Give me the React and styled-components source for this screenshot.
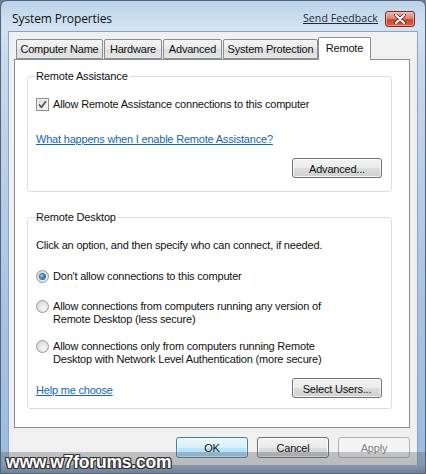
import React from "react";
import styled, { createGlobalStyle } from "styled-components";

const Global = createGlobalStyle`
  html, body { margin: 0; padding: 0; }
  body {
    width: 426px; height: 474px; overflow: hidden;
    font-family: "Liberation Sans", Arial, sans-serif;
    background: #6f8094;
  }
`;

const Frame = styled.div`
  position: relative;
  box-sizing: border-box;
  width: 426px;
  height: 474px;
  border: 1px solid #52647a;
  border-radius: 7px 7px 0 0;
  background: linear-gradient(to bottom, #bcd3ea 0px, #d3e2f2 26px, #c6d9ee 60px, #a9c4e3 300px, #9bbbe0 474px);
  display: flex;
  flex-direction: column;
  overflow: hidden;
`;

const TitleBar = styled.div`
  height: 30px;
  display: flex;
  align-items: flex-start;
  padding: 9px 10px 0 11px;
  box-sizing: border-box;
`;

const Title = styled.div`
  flex: 1;
  font-family: "Open Sans", "Noto Sans", sans-serif;
  font-size: 12px;
  line-height: 17px;
  color: #111;
  letter-spacing: -0.1px;
`;

const FeedbackLink = styled.a`
  font-family: "Open Sans", "Noto Sans", sans-serif;
  font-size: 10.5px;
  line-height: 17px;
  color: #1b2a3d;
  text-decoration: underline;
  margin-right: 7px;
  letter-spacing: 0.1px;
`;

const CloseButton = styled.div`
  width: 30px;
  height: 16px;
  margin-top: 1px;
  box-sizing: border-box;
  border: 1px solid #7d2a1e;
  border-radius: 3px;
  background: linear-gradient(to bottom, #eab2a6 0%, #de8875 45%, #c9442b 55%, #d2674d 100%);
  display: flex;
  align-items: center;
  justify-content: center;
  box-shadow: inset 0 0 0 1px rgba(255, 220, 210, 0.5);
`;

const Client = styled.div`
  margin: 0 7px 0 7px;
  flex: 1;
  background: #f0f0f0;
  border: 1px solid #8ea4bd;
  border-bottom: none;
  box-sizing: border-box;
  padding: 5px 7px 0 5px;
  display: flex;
  flex-direction: column;
`;

const TabRow = styled.div`
  display: flex;
  align-items: flex-end;
  height: 22px;
  padding-left: 2px;
  position: relative;
  z-index: 1;
`;

const Tab = styled.div`
  box-sizing: border-box;
  width: ${(p) => p.$w}px;
  height: ${(p) => (p.$active ? 23 : 20)}px;
  margin-right: ${(p) => (p.$active ? 0 : 1)}px;
  margin-left: ${(p) => (p.$active ? -1 : 0)}px;
  margin-bottom: ${(p) => (p.$active ? -1 : 0)}px;
  border: 1px solid #898c95;
  border-bottom: ${(p) => (p.$active ? "none" : "1px solid #898c95")};
  border-radius: 2px 2px 0 0;
  background: ${(p) =>
    p.$active ? "#ffffff" : "linear-gradient(to bottom, #f3f3f3 0%, #ebebeb 50%, #dcdcdc 51%, #e6e6e6 100%)"};
  font-size: 11px;
  letter-spacing: -0.2px;
  color: #111;
  display: flex;
  justify-content: center;
  align-items: ${(p) => (p.$active ? "flex-start" : "center")};
  padding-top: ${(p) => (p.$active ? 4 : 0)}px;
  white-space: nowrap;
`;

const Panel = styled.div`
  height: 369px;
  box-sizing: border-box;
  background: #ffffff;
  border: 1px solid #898c95;
  padding: 9px 17px 0 12px;
  display: flex;
  flex-direction: column;
  gap: 18px;
`;

const Group = styled.fieldset`
  margin: 0;
  border: 1px solid #d5dfe5;
  border-radius: 3px;
  padding: 0 9px ${(p) => p.$pb}px 8px;
  display: flex;
  flex-direction: column;
`;

const Legend = styled.legend`
  padding: 0 2px 0 0;
  margin-left: 0;
  font-size: 11px;
  letter-spacing: -0.15px;
  line-height: 14px;
  color: #111;
`;

const Text = styled.div`
  font-size: 11px;
  letter-spacing: -0.2px;
  line-height: 13px;
  color: #111;
  margin-top: ${(p) => p.$mt || 0}px;
`;

const Option = styled.div`
  display: flex;
  align-items: flex-start;
  gap: 4px;
  margin-top: ${(p) => p.$mt || 0}px;
`;

const CheckBox = styled.div`
  width: 13px;
  height: 13px;
  box-sizing: border-box;
  border: 1px solid #8f8f8f;
  background: linear-gradient(135deg, #dcdcdc, #f7f7f7);
  flex-shrink: 0;
  display: flex;
  align-items: center;
  justify-content: center;
  box-shadow: inset 0 0 0 1px #f2f2f2;
`;

const Radio = styled.div`
  width: 13px;
  height: 13px;
  box-sizing: border-box;
  border-radius: 50%;
  border: 1px solid #979797;
  background: radial-gradient(circle at 60% 60%, #f8f8f8 0%, #dcdcdc 70%, #cfcfcf 100%);
  flex-shrink: 0;
  display: flex;
  align-items: center;
  justify-content: center;
  &::after {
    content: "";
    display: ${(p) => (p.$on ? "block" : "none")};
    width: 5px;
    height: 5px;
    border-radius: 50%;
    background: radial-gradient(circle at 35% 35%, #9fd2f5 0%, #2b78b8 55%, #17497e 100%);
    box-shadow: 0 0 0 1px #3c6f9e;
  }
`;

const Link = styled.a`
  font-size: 11px;
  letter-spacing: -0.2px;
  line-height: 14px;
  color: #1464b8;
  text-decoration: underline;
  align-self: flex-start;
  margin-top: ${(p) => p.$mt || 0}px;
`;

const BtnRow = styled.div`
  display: flex;
  justify-content: ${(p) => (p.$between ? "space-between" : "flex-end")};
  align-items: center;
  gap: 9px;
  margin-top: ${(p) => p.$mt || 0}px;
`;

const RowLink = styled(Link)`
  align-self: center;
  margin-top: 3px;
`;

const Button = styled.div`
  box-sizing: border-box;
  width: ${(p) => p.$w}px;
  height: ${(p) => p.$h || 20}px;
  border: 1px solid ${(p) => (p.$disabled ? "#adb2b5" : p.$default ? "#3c7fb1" : "#707070")};
  border-radius: 3px;
  background: ${(p) =>
    p.$disabled
      ? "#f4f4f4"
      : p.$default
      ? "linear-gradient(to bottom, #eaf6fd 0%, #d9f0fc 50%, #bee6fd 51%, #a7d9f5 100%)"
      : "linear-gradient(to bottom, #f2f2f2 0%, #ebebeb 50%, #dddddd 51%, #cfcfcf 100%)"};
  box-shadow: inset 0 0 0 1px ${(p) => (p.$disabled ? "#f4f4f4" : "rgba(255,255,255,0.75)")};
  font-size: 11px;
  letter-spacing: -0.2px;
  color: ${(p) => (p.$disabled ? "#838383" : "#111")};
  display: flex;
  align-items: center;
  justify-content: center;
  padding-top: 1px;
`;

const Footer = styled.div`
  display: flex;
  justify-content: flex-end;
  gap: 9px;
  margin-top: 9px;
`;

const Watermark = styled.div`
  position: absolute;
  left: 0;
  right: 0;
  bottom: 0;
  height: 21px;
  background: linear-gradient(to bottom, rgba(90, 92, 96, 0.32) 0%, rgba(90, 92, 96, 0.36) 60%, rgba(70, 72, 78, 0.5) 100%);
  display: flex;
  align-items: center;
  padding-left: 5px;
`;

const WatermarkText = styled.span`
  font-family: "Liberation Sans", Arial, sans-serif;
  font-weight: bold;
  font-size: 17.5px;
  letter-spacing: -0.2px;
  color: #ffffff;
  text-shadow: 1px 1px 0 #333, -1px -1px 0 #333, 1px -1px 0 #333, -1px 1px 0 #333,
    0 1px 0 #333, 1px 0 0 #333, 0 -1px 0 #333, -1px 0 0 #333;
`;

const Bottom = styled.div`
  height: 8px;
`;

export default function App() {
  return (
    <>
      <Global />
      <Frame>
        <TitleBar>
          <Title>System Properties</Title>
          <FeedbackLink>Send Feedback</FeedbackLink>
          <CloseButton>
            <svg width="12" height="10" viewBox="0 0 12 10">
              <path d="M2 1 L10 9 M10 1 L2 9" stroke="#5a1a10" strokeWidth="3.4" strokeLinecap="round" />
              <path d="M2 1 L10 9 M10 1 L2 9" stroke="#ffffff" strokeWidth="2" strokeLinecap="round" />
            </svg>
          </CloseButton>
        </TitleBar>
        <Client>
          <TabRow>
            <Tab $w={87}>Computer Name</Tab>
            <Tab $w={58}>Hardware</Tab>
            <Tab $w={59}>Advanced</Tab>
            <Tab $w={95}>System Protection</Tab>
            <Tab $w={53} $active>Remote</Tab>
          </TabRow>
          <Panel>
            <Group $pb={13}>
              <Legend>Remote Assistance</Legend>
              <Option $mt={15}>
                <CheckBox>
                  <svg width="9" height="9" viewBox="0 0 9 9">
                    <path d="M1 4.5 L3.5 7.2 L8 1.2" fill="none" stroke="#4a4f57" strokeWidth="1.6" />
                  </svg>
                </CheckBox>
                <Text>Allow Remote Assistance connections to this computer</Text>
              </Option>
              <Link $mt={21}>What happens when I enable Remote Assistance?</Link>
              <BtnRow $mt={12}>
                <Button $w={90}>Advanced...</Button>
              </BtnRow>
            </Group>
            <Group $pb={10}>
              <Legend>Remote Desktop</Legend>
              <Text $mt={15}>Click an option, and then specify who can connect, if needed.</Text>
              <Option $mt={18}>
                <Radio $on />
                <Text>Don't allow connections to this computer</Text>
              </Option>
              <Option $mt={17}>
                <Radio />
                <Text>
                  Allow connections from computers running any version of
                  <br />
                  Remote Desktop (less secure)
                </Text>
              </Option>
              <Option $mt={14}>
                <Radio />
                <Text>
                  Allow connections only from computers running Remote
                  <br />
                  Desktop with Network Level Authentication (more secure)
                </Text>
              </Option>
              <BtnRow $between $mt={12}>
                <RowLink>Help me choose</RowLink>
                <Button $w={90}>Select Users...</Button>
              </BtnRow>
            </Group>
          </Panel>
          <Footer>
            <Button $w={72} $h={21} $default>OK</Button>
            <Button $w={72} $h={21}>Cancel</Button>
            <Button $w={72} $h={21} $disabled>Apply</Button>
          </Footer>
        </Client>
        <Bottom />
        <Watermark>
          <WatermarkText>www.w7forums.com</WatermarkText>
        </Watermark>
      </Frame>
    </>
  );
}
